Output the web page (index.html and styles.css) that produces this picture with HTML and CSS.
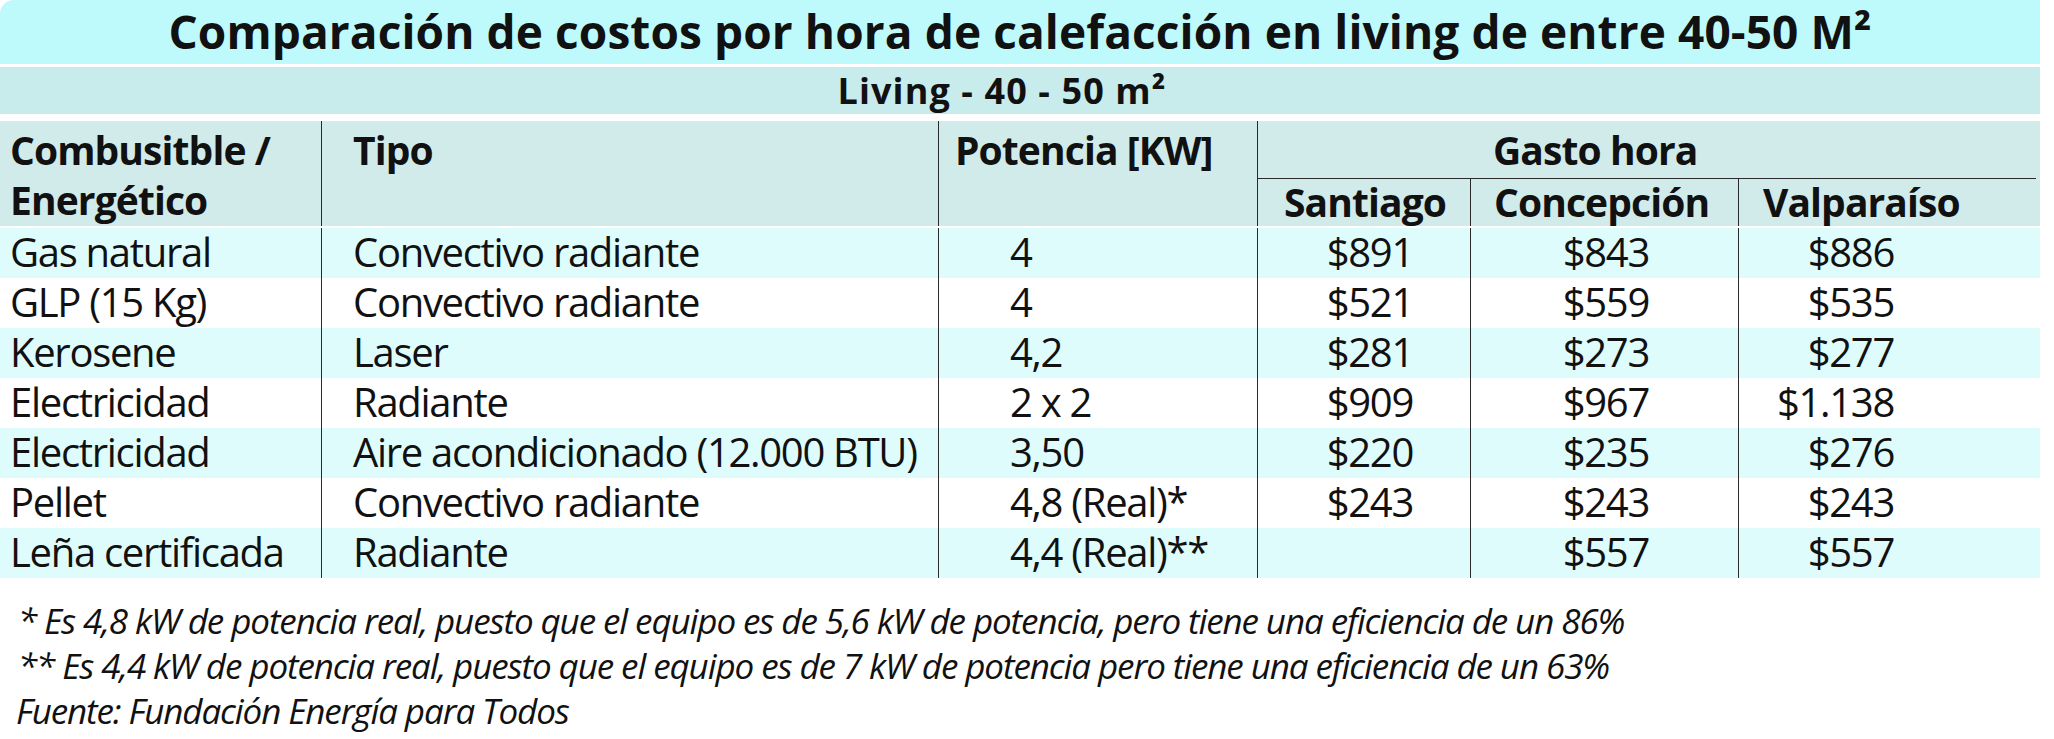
FILE: index.html
```html
<!DOCTYPE html>
<html lang="es">
<head>
<meta charset="utf-8">
<title>Comparación de costos</title>
<link rel="stylesheet" href="styles.css">
</head>
<body>
<div class="chart">
  <div class="title">Comparación de costos por hora de calefacción en living de entre 40-50 M²</div>
  <div class="subtitle">Living - 40 - 50 m²</div>
  <div class="head">
    <div class="h-fuel">Combusitble /<br>Energético</div>
    <div class="h-type">Tipo</div>
    <div class="h-pow">Potencia [KW]</div>
    <div class="h-cost">Gasto hora</div>
    <div class="h-city h-stgo">Santiago</div>
    <div class="h-city h-conc">Concepción</div>
    <div class="h-city h-valp">Valparaíso</div>
  </div>
  <div class="rows">
    <div class="row alt">
      <div class="c-fuel">Gas natural</div><div class="c-type">Convectivo radiante</div><div class="c-pow">4</div>
      <div class="c-num n1">$891</div><div class="c-num n2">$843</div><div class="c-num n3">$886</div>
    </div>
    <div class="row">
      <div class="c-fuel">GLP (15 Kg)</div><div class="c-type">Convectivo radiante</div><div class="c-pow">4</div>
      <div class="c-num n1">$521</div><div class="c-num n2">$559</div><div class="c-num n3">$535</div>
    </div>
    <div class="row alt">
      <div class="c-fuel">Kerosene</div><div class="c-type">Laser</div><div class="c-pow">4,2</div>
      <div class="c-num n1">$281</div><div class="c-num n2">$273</div><div class="c-num n3">$277</div>
    </div>
    <div class="row">
      <div class="c-fuel">Electricidad</div><div class="c-type">Radiante</div><div class="c-pow">2 x 2</div>
      <div class="c-num n1">$909</div><div class="c-num n2">$967</div><div class="c-num n3">$1.138</div>
    </div>
    <div class="row alt">
      <div class="c-fuel">Electricidad</div><div class="c-type">Aire acondicionado (12.000 BTU)</div><div class="c-pow">3,50</div>
      <div class="c-num n1">$220</div><div class="c-num n2">$235</div><div class="c-num n3">$276</div>
    </div>
    <div class="row">
      <div class="c-fuel">Pellet</div><div class="c-type">Convectivo radiante</div><div class="c-pow">4,8 (Real)*</div>
      <div class="c-num n1">$243</div><div class="c-num n2">$243</div><div class="c-num n3">$243</div>
    </div>
    <div class="row alt">
      <div class="c-fuel">Leña certificada</div><div class="c-type">Radiante</div><div class="c-pow">4,4 (Real)**</div>
      <div class="c-num n1"></div><div class="c-num n2">$557</div><div class="c-num n3">$557</div>
    </div>
  </div>
  <div class="notes">
    <p class="note n-a">* Es 4,8 kW de potencia real, puesto que el equipo es de 5,6 kW de potencia, pero tiene una eficiencia de un 86%</p>
    <p class="note n-b">** Es 4,4 kW de potencia real, puesto que el equipo es de 7 kW de potencia pero tiene una eficiencia de un 63%</p>
    <p class="note n-c">Fuente: Fundación Energía para Todos</p>
  </div>
</div>
</body>
</html>
```
FILE: styles.css
```css
* { box-sizing: border-box; }
html, body { margin: 0; padding: 0; background: #ffffff; }
body {
  font-family: "Open Sans", "Noto Sans", sans-serif;
  color: #111111;
  width: 2054px;
  height: 739px;
  overflow: hidden;
}
.chart {
  width: 2040px;
}
.title {
  height: 64px;
  background: #befafc;
  border-top-left-radius: 14px;
  text-align: center;
  font-weight: 700;
  font-size: 46px;
  line-height: 62px;
  letter-spacing: 0.1px;
  white-space: nowrap;
}
.subtitle {
  margin-top: 3px;
  height: 47px;
  background: #c8ecec;
  text-align: center;
  font-weight: 700;
  font-size: 36px;
  line-height: 47px;
  letter-spacing: 1.1px;
  padding-right: 36px;
}
.head {
  margin-top: 7px;
  display: grid;
  grid-template-columns: 321px 617px 319px 213px 268px 302px;
  grid-template-rows: 58px 47px;
  background: #d1ebeb;
  font-weight: 700;
  font-size: 39px;
  letter-spacing: -0.9px;
}
.head > div { line-height: 50px; white-space: nowrap; }
.h-fuel { grid-row: 1 / 3; grid-column: 1; padding: 4px 0 0 10px; }
.h-type { grid-row: 1 / 3; grid-column: 2; border-left: 1px solid #2a2a2a; padding: 4px 0 0 31px; }
.h-pow { grid-row: 1 / 3; grid-column: 3; border-left: 1px solid #2a2a2a; padding: 4px 0 0 16px; }
.h-cost {
  grid-row: 1; grid-column: 4 / 7;
  border-left: 1px solid #2a2a2a;
  border-bottom: 1px solid #2a2a2a;
  padding: 4px 0 0 235px;
  margin-right: 4px;
}
.h-city { grid-row: 2; line-height: 46px !important; }
.h-stgo { grid-column: 4; border-left: 1px solid #2a2a2a; padding-left: 26px; }
.h-conc { grid-column: 5; border-left: 1px solid #2a2a2a; padding-left: 23px; }
.h-valp { grid-column: 6; border-left: 1px solid #2a2a2a; padding-left: 24px; }
.rows { margin-top: 2px; }
.row {
  display: grid;
  grid-template-columns: 321px 617px 319px 213px 268px 302px;
  height: 50px;
  font-size: 40px;
  letter-spacing: -1.3px;
  line-height: 48px;
  background: #ffffff;
}
.row.alt { background: #dffcfc; }
.row > div { white-space: nowrap; }
.c-fuel { padding-left: 10px; }
.c-type { border-left: 1px solid #2a2a2a; padding-left: 31px; }
.c-pow { border-left: 1px solid #2a2a2a; padding-left: 71px; }
.c-num { border-left: 1px solid #2a2a2a; text-align: right; }
.n1 { padding-right: 57px; }
.n2 { padding-right: 89px; }
.n3 { padding-right: 146px; }
.notes { margin-top: 20px; }
.note {
  margin: 0;
  font-style: italic;
  font-size: 35px;
  letter-spacing: -1.1px;
  line-height: 45px;
  white-space: nowrap;
}
.n-a { padding-left: 18px; }
.n-b { padding-left: 18px; }
.n-c { padding-left: 16px; }
```
